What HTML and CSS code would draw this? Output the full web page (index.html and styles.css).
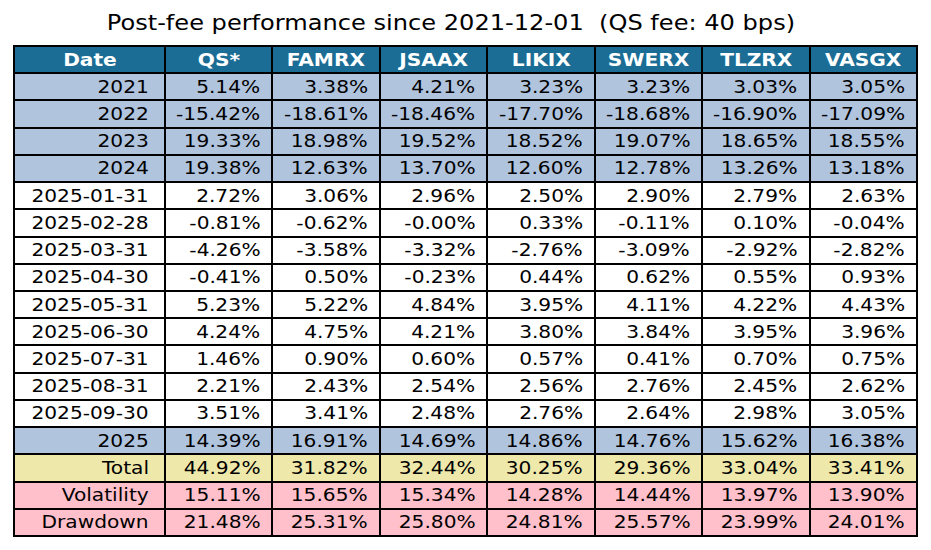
FILE: index.html
```html
<!DOCTYPE html>
<html>
<head>
<meta charset="utf-8">
<link rel="stylesheet" href="styles.css">
</head>
<body>
<div class="page">
  <div class="title"><span class="tt">Post-fee performance since 2021-12-01&nbsp; (QS fee: 40 bps)</span></div>
  <div class="tbl">
    <div class="c h"><span class="t">Date</span></div><div class="c h"><span class="t">QS*</span></div><div class="c h"><span class="t">FAMRX</span></div><div class="c h"><span class="t">JSAAX</span></div><div class="c h"><span class="t">LIKIX</span></div><div class="c h"><span class="t">SWERX</span></div><div class="c h"><span class="t">TLZRX</span></div><div class="c h"><span class="t">VASGX</span></div>

    <div class="c yr first"><span class="t">2021</span></div><div class="c yr"><span class="t">5.14%</span></div><div class="c yr"><span class="t">3.38%</span></div><div class="c yr"><span class="t">4.21%</span></div><div class="c yr"><span class="t">3.23%</span></div><div class="c yr"><span class="t">3.23%</span></div><div class="c yr"><span class="t">3.03%</span></div><div class="c yr"><span class="t">3.05%</span></div>

    <div class="c yr first"><span class="t">2022</span></div><div class="c yr"><span class="t">-15.42%</span></div><div class="c yr"><span class="t">-18.61%</span></div><div class="c yr"><span class="t">-18.46%</span></div><div class="c yr"><span class="t">-17.70%</span></div><div class="c yr"><span class="t">-18.68%</span></div><div class="c yr"><span class="t">-16.90%</span></div><div class="c yr"><span class="t">-17.09%</span></div>

    <div class="c yr first"><span class="t">2023</span></div><div class="c yr"><span class="t">19.33%</span></div><div class="c yr"><span class="t">18.98%</span></div><div class="c yr"><span class="t">19.52%</span></div><div class="c yr"><span class="t">18.52%</span></div><div class="c yr"><span class="t">19.07%</span></div><div class="c yr"><span class="t">18.65%</span></div><div class="c yr"><span class="t">18.55%</span></div>

    <div class="c yr first"><span class="t">2024</span></div><div class="c yr"><span class="t">19.38%</span></div><div class="c yr"><span class="t">12.63%</span></div><div class="c yr"><span class="t">13.70%</span></div><div class="c yr"><span class="t">12.60%</span></div><div class="c yr"><span class="t">12.78%</span></div><div class="c yr"><span class="t">13.26%</span></div><div class="c yr"><span class="t">13.18%</span></div>

    <div class="c mo first"><span class="t">2025-01-31</span></div><div class="c mo"><span class="t">2.72%</span></div><div class="c mo"><span class="t">3.06%</span></div><div class="c mo"><span class="t">2.96%</span></div><div class="c mo"><span class="t">2.50%</span></div><div class="c mo"><span class="t">2.90%</span></div><div class="c mo"><span class="t">2.79%</span></div><div class="c mo"><span class="t">2.63%</span></div>

    <div class="c mo first"><span class="t">2025-02-28</span></div><div class="c mo"><span class="t">-0.81%</span></div><div class="c mo"><span class="t">-0.62%</span></div><div class="c mo"><span class="t">-0.00%</span></div><div class="c mo"><span class="t">0.33%</span></div><div class="c mo"><span class="t">-0.11%</span></div><div class="c mo"><span class="t">0.10%</span></div><div class="c mo"><span class="t">-0.04%</span></div>

    <div class="c mo first"><span class="t">2025-03-31</span></div><div class="c mo"><span class="t">-4.26%</span></div><div class="c mo"><span class="t">-3.58%</span></div><div class="c mo"><span class="t">-3.32%</span></div><div class="c mo"><span class="t">-2.76%</span></div><div class="c mo"><span class="t">-3.09%</span></div><div class="c mo"><span class="t">-2.92%</span></div><div class="c mo"><span class="t">-2.82%</span></div>

    <div class="c mo first"><span class="t">2025-04-30</span></div><div class="c mo"><span class="t">-0.41%</span></div><div class="c mo"><span class="t">0.50%</span></div><div class="c mo"><span class="t">-0.23%</span></div><div class="c mo"><span class="t">0.44%</span></div><div class="c mo"><span class="t">0.62%</span></div><div class="c mo"><span class="t">0.55%</span></div><div class="c mo"><span class="t">0.93%</span></div>

    <div class="c mo first"><span class="t">2025-05-31</span></div><div class="c mo"><span class="t">5.23%</span></div><div class="c mo"><span class="t">5.22%</span></div><div class="c mo"><span class="t">4.84%</span></div><div class="c mo"><span class="t">3.95%</span></div><div class="c mo"><span class="t">4.11%</span></div><div class="c mo"><span class="t">4.22%</span></div><div class="c mo"><span class="t">4.43%</span></div>

    <div class="c mo first"><span class="t">2025-06-30</span></div><div class="c mo"><span class="t">4.24%</span></div><div class="c mo"><span class="t">4.75%</span></div><div class="c mo"><span class="t">4.21%</span></div><div class="c mo"><span class="t">3.80%</span></div><div class="c mo"><span class="t">3.84%</span></div><div class="c mo"><span class="t">3.95%</span></div><div class="c mo"><span class="t">3.96%</span></div>

    <div class="c mo first"><span class="t">2025-07-31</span></div><div class="c mo"><span class="t">1.46%</span></div><div class="c mo"><span class="t">0.90%</span></div><div class="c mo"><span class="t">0.60%</span></div><div class="c mo"><span class="t">0.57%</span></div><div class="c mo"><span class="t">0.41%</span></div><div class="c mo"><span class="t">0.70%</span></div><div class="c mo"><span class="t">0.75%</span></div>

    <div class="c mo first"><span class="t">2025-08-31</span></div><div class="c mo"><span class="t">2.21%</span></div><div class="c mo"><span class="t">2.43%</span></div><div class="c mo"><span class="t">2.54%</span></div><div class="c mo"><span class="t">2.56%</span></div><div class="c mo"><span class="t">2.76%</span></div><div class="c mo"><span class="t">2.45%</span></div><div class="c mo"><span class="t">2.62%</span></div>

    <div class="c mo first"><span class="t">2025-09-30</span></div><div class="c mo"><span class="t">3.51%</span></div><div class="c mo"><span class="t">3.41%</span></div><div class="c mo"><span class="t">2.48%</span></div><div class="c mo"><span class="t">2.76%</span></div><div class="c mo"><span class="t">2.64%</span></div><div class="c mo"><span class="t">2.98%</span></div><div class="c mo"><span class="t">3.05%</span></div>

    <div class="c yr first"><span class="t">2025</span></div><div class="c yr"><span class="t">14.39%</span></div><div class="c yr"><span class="t">16.91%</span></div><div class="c yr"><span class="t">14.69%</span></div><div class="c yr"><span class="t">14.86%</span></div><div class="c yr"><span class="t">14.76%</span></div><div class="c yr"><span class="t">15.62%</span></div><div class="c yr"><span class="t">16.38%</span></div>

    <div class="c tot first"><span class="t">Total</span></div><div class="c tot"><span class="t">44.92%</span></div><div class="c tot"><span class="t">31.82%</span></div><div class="c tot"><span class="t">32.44%</span></div><div class="c tot"><span class="t">30.25%</span></div><div class="c tot"><span class="t">29.36%</span></div><div class="c tot"><span class="t">33.04%</span></div><div class="c tot"><span class="t">33.41%</span></div>

    <div class="c risk first"><span class="t">Volatility</span></div><div class="c risk"><span class="t">15.11%</span></div><div class="c risk"><span class="t">15.65%</span></div><div class="c risk"><span class="t">15.34%</span></div><div class="c risk"><span class="t">14.28%</span></div><div class="c risk"><span class="t">14.44%</span></div><div class="c risk"><span class="t">13.97%</span></div><div class="c risk"><span class="t">13.90%</span></div>

    <div class="c risk first"><span class="t">Drawdown</span></div><div class="c risk"><span class="t">21.48%</span></div><div class="c risk"><span class="t">25.31%</span></div><div class="c risk"><span class="t">25.80%</span></div><div class="c risk"><span class="t">24.81%</span></div><div class="c risk"><span class="t">25.57%</span></div><div class="c risk"><span class="t">23.99%</span></div><div class="c risk"><span class="t">24.01%</span></div>
  </div>
</div>
</body>
</html>
```

FILE: styles.css
```css
html, body {
  margin: 0;
  padding: 0;
  background: #ffffff;
}

.page {
  width: 931px;
  height: 550px;
  font-family: "DejaVu Sans", sans-serif;
  color: #000000;
}

.title {
  padding: 11px 30px 0 0;
  height: 24px;
  line-height: 24px;
  font-size: 20.5px;
  text-align: center;
  white-space: nowrap;
}

.tt {
  display: inline-block;
  transform: scaleX(1.175);
  transform-origin: center;
}

.tbl {
  margin: 10px 0 0 13px;
  width: 905px;
  height: 492px;
  box-sizing: border-box;
  padding: 2px;
  gap: 2px;
  background: #000000;
  display: grid;
  grid-template-columns: 149px repeat(7, 1fr);
  grid-template-rows: repeat(18, 1fr);
  font-size: 18px;
}

.c {
  display: flex;
  align-items: center;
  justify-content: flex-end;
  padding-right: 11px;
  white-space: nowrap;
  line-height: 1;
}

.c.first {
  padding-right: 15px;
}

.t {
  display: inline-block;
  transform: scaleX(1.12);
  transform-origin: right center;
}

.h {
  background: #1b6d95;
  color: #ffffff;
  font-weight: bold;
  justify-content: center;
  padding-right: 0;
}

.h .t {
  transform-origin: center;
}

.yr { background: #b0c4de; }
.mo { background: #ffffff; }
.tot { background: #eee8aa; }
.risk { background: #ffc0cb; }
```
